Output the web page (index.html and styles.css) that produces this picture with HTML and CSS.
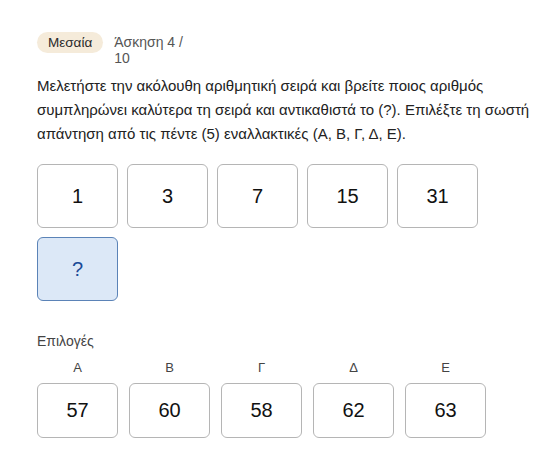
FILE: index.html
```html
<!DOCTYPE html>
<html lang="el">
<head>
<meta charset="utf-8">
<title>Άσκηση 4 / 10</title>
<link rel="stylesheet" href="styles.css">
</head>
<body>
<main class="page">
  <header class="header">
    <span class="badge">Μεσαία</span>
    <span class="counter">Άσκηση 4 / 10</span>
  </header>
  <p class="question">Μελετήστε την ακόλουθη αριθμητική σειρά και βρείτε ποιος αριθμός συμπληρώνει καλύτερα τη σειρά και αντικαθιστά το (?). Επιλέξτε τη σωστή απάντηση από τις πέντε (5) εναλλακτικές (Α, Β, Γ, Δ, Ε).</p>
  <div class="sequence">
    <div class="cell">1</div>
    <div class="cell">3</div>
    <div class="cell">7</div>
    <div class="cell">15</div>
    <div class="cell">31</div>
    <div class="cell cell-missing">?</div>
  </div>
  <div class="options-title">Επιλογές</div>
  <div class="options">
    <div class="option"><span class="option-letter">Α</span><div class="option-box">57</div></div>
    <div class="option"><span class="option-letter">Β</span><div class="option-box">60</div></div>
    <div class="option"><span class="option-letter">Γ</span><div class="option-box">58</div></div>
    <div class="option"><span class="option-letter">Δ</span><div class="option-box">62</div></div>
    <div class="option"><span class="option-letter">Ε</span><div class="option-box">63</div></div>
  </div>
</main>
</body>
</html>
```
FILE: styles.css
```css
* { box-sizing: border-box; }
html, body { margin: 0; padding: 0; background: #ffffff; }
body {
  font-family: "Liberation Sans", Arial, Helvetica, sans-serif;
  color: #222222;
}
.page {
  padding: 32px 12px 0 37px;
}
.header {
  display: flex;
  align-items: flex-start;
  gap: 11px;
}
.badge {
  display: inline-block;
  background: #f5ebda;
  color: #2a2a2a;
  font-size: 13.5px;
  line-height: 15px;
  padding: 3px 11px;
  border-radius: 11px;
}
.counter {
  width: 82px;
  margin-top: 2px;
  font-size: 14px;
  line-height: 16px;
  color: #555555;
}
.question {
  margin: 8px 0 0 0;
  max-width: 504px;
  font-size: 15px;
  line-height: 24px;
  color: #222222;
}
.sequence {
  margin-top: 18px;
  display: grid;
  grid-template-columns: repeat(5, 81px);
  gap: 9px;
}
.cell {
  height: 64px;
  border: 1px solid #b5b5b5;
  border-radius: 6px;
  display: flex;
  align-items: center;
  justify-content: center;
  font-size: 20px;
  color: #111111;
  background: #ffffff;
}
.cell-missing {
  background: #dce8f7;
  border-color: #5b83b7;
  color: #1a4a96;
}
.options-title {
  margin-top: 32px;
  font-size: 14px;
  line-height: 16px;
  color: #444444;
}
.options {
  margin-top: 11px;
  display: grid;
  grid-template-columns: repeat(5, 81px);
  gap: 11px;
}
.option {
  display: flex;
  flex-direction: column;
  align-items: center;
  gap: 7px;
}
.option-letter {
  font-size: 13px;
  line-height: 16px;
  color: #444444;
}
.option-box {
  width: 100%;
  height: 55px;
  border: 1px solid #b5b5b5;
  border-radius: 6px;
  display: flex;
  align-items: center;
  justify-content: center;
  font-size: 20px;
  color: #111111;
}
```
